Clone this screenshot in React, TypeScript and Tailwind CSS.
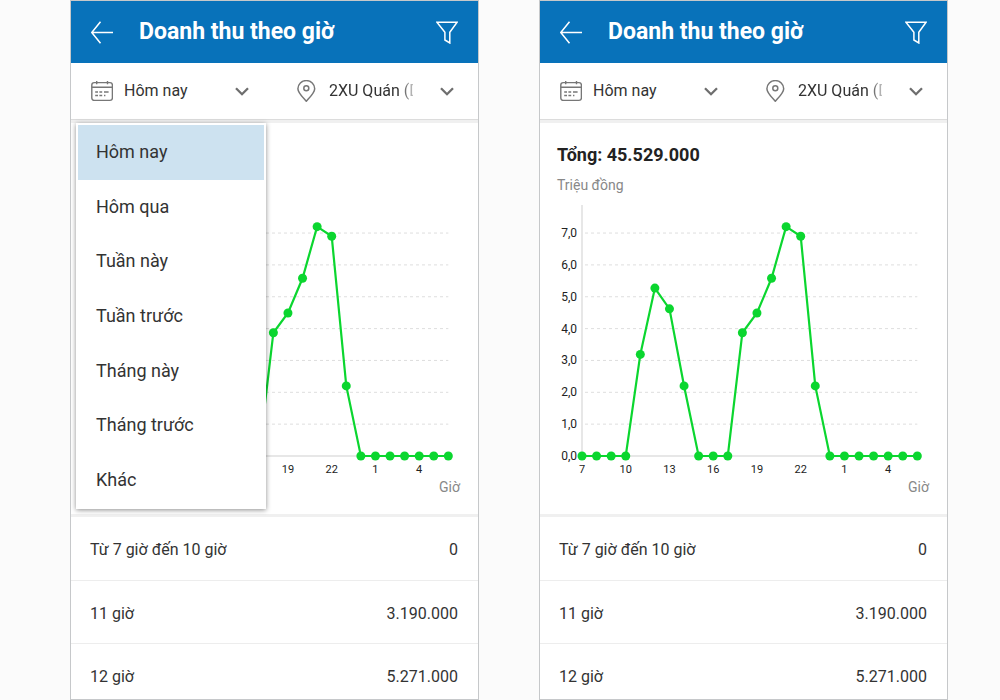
import React from "react";

const PERIODS = [
  "Hôm nay",
  "Hôm qua",
  "Tuần này",
  "Tuần trước",
  "Tháng này",
  "Tháng trước",
  "Khác",
];

const BRANCHES = ["2XU Quán (Duy Tân)"];

// Revenue in millions per hour, from 7:00 to 6:00 the next day
const REVENUE = [
  0, 0, 0, 0, 3.19, 5.271, 4.62, 2.2, 0, 0, 0, 3.87, 4.49, 5.58, 7.2, 6.9, 2.2,
  0, 0, 0, 0, 0, 0, 0,
];

const ROWS = [
  { label: "Từ 7 giờ đến 10 giờ", value: "0" },
  { label: "11 giờ", value: "3.190.000" },
  { label: "12 giờ", value: "5.271.000" },
];

const ORIGIN_X = 42;
const ORIGIN_Y = 261;
const STEP_X = 14.58;
const STEP_Y = 31.85;

const getX = (index: number) => ORIGIN_X + index * STEP_X;
const getY = (value: number) => ORIGIN_Y - value * STEP_Y;

const CalendarIcon = () => (
  <svg className="w-[22px] h-[22px] shrink-0" viewBox="0 0 22 22" fill="none" stroke="#777" strokeWidth="1.4" aria-hidden="true">
    <rect x="0.8" y="2.6" width="20.6" height="17.8" rx="2.4" />
    <path d="M0.8 7.2H21.4M5.7 1v3.2M16.5 1v3.2" />
    <path d="M4.2 12h2.8M8.4 12h2.8M13 12h4.6M4.2 15.4h2.8M8.4 15.4h2.8M13 15.4h1.4" strokeWidth="1.5" />
  </svg>
);

const PinIcon = () => (
  <svg className="w-[22px] h-[22px] shrink-0" viewBox="0 0 22 22" fill="none" stroke="#777" strokeWidth="1.5" aria-hidden="true">
    <path d="M10.3 21.2C7.7 18.2 1.9 13 1.9 8.7a8.4 8.1 0 0 1 16.8 0C18.7 13 12.9 18.2 10.3 21.2Z" />
    <circle cx="10.3" cy="8.2" r="2.5" />
  </svg>
);

const ChevronIcon = () => (
  <svg className="w-[14px] h-[9px] shrink-0" viewBox="0 0 14 9" fill="none" stroke="#6e6e6e" strokeWidth="2.3" aria-hidden="true">
    <path d="M1 1.2 7 7.2 13 1.2" />
  </svg>
);

const RevenueChart = () => (
  <svg className="block w-full h-auto" viewBox="0 0 407 319" role="img" aria-label="Doanh thu theo giờ">
    {[1, 2, 3, 4, 5, 6, 7].map(value => (
      <line
        key={value}
        x1={ORIGIN_X + 3}
        x2={getX(23)}
        y1={getY(value)}
        y2={getY(value)}
        stroke="#dedede"
        strokeDasharray="3 3"
      />
    ))}
    <path d={`M${ORIGIN_X} 10V${ORIGIN_Y}H${getX(23)}`} fill="none" stroke="#cfcfcf" />

    {[0, 1, 2, 3, 4, 5, 6, 7].map(value => (
      <text key={value} x="37" y={getY(value) + 4} textAnchor="end" fontSize="12" fill="#222">
        {value},0
      </text>
    ))}
    {[7, 10, 13, 16, 19, 22, 1, 4].map((hour, i) => (
      <text key={hour} x={getX(i * 3)} y="278" textAnchor="middle" fontSize="11" fill="#222">
        {hour}
      </text>
    ))}
    <text x="389" y="297" textAnchor="end" fontSize="14" fill="#888">
      Giờ
    </text>

    <polyline
      points={REVENUE.map((v, i) => `${getX(i)},${getY(v)}`).join(" ")}
      fill="none"
      stroke="#0bd62f"
      strokeWidth="2.2"
    />
    {REVENUE.map((v, i) => (
      <circle key={i} cx={getX(i)} cy={getY(v)} r="4.5" fill="#0bd62f" />
    ))}
  </svg>
);

interface RevenueScreenProps {
  id: string;
  defaultOpen?: boolean;
}

const RevenueScreen: React.FC<RevenueScreenProps> = ({ id, defaultOpen = false }) => {
  const [isOpen, setIsOpen] = React.useState(defaultOpen);
  const [period, setPeriod] = React.useState(PERIODS[0]);

  return (
    <section className="flex flex-col min-w-0 h-full bg-white border border-[#c6c8ca] overflow-hidden">
      {/* Header */}
      <header className="flex items-center h-[62px] shrink-0 px-5 bg-[#0872ba] text-white">
        <button type="button" aria-label="Quay lại">
          <svg className="w-[22px] h-[24px]" viewBox="0 0 22 24" fill="none" stroke="currentColor" strokeWidth="1.5">
            <path d="M22 12.5H0.8M9.5 1.7 0.8 12.5 9.5 23.3" />
          </svg>
        </button>
        <h1 className="flex-1 ml-[26px] text-[23px] leading-8 font-bold">Doanh thu theo giờ</h1>
        <button type="button" aria-label="Lọc">
          <svg className="w-[22px] h-[24px]" viewBox="0 0 22 24" fill="none" stroke="currentColor" strokeWidth="1.5">
            <path d="M0.9 2.2H21.1L13.8 12.2V23L8.9 20V12.2Z" />
          </svg>
        </button>
      </header>

      {/* Filters */}
      <div className="relative grid grid-cols-2 gap-[47px] h-14 shrink-0 pl-5 pr-6 text-[#333]">
        <label htmlFor={`${id}-period`} className="flex items-center gap-[11px] min-w-0">
          <CalendarIcon />
          <select
            id={`${id}-period`}
            aria-label="Thời gian"
            className="flex-1 min-w-0 appearance-none bg-transparent text-base outline-none"
            value={period}
            onChange={e => setPeriod(e.target.value)}
            onMouseDown={e => {
              e.preventDefault();
              setIsOpen(!isOpen);
            }}
          >
            {PERIODS.map(item => (
              <option key={item}>{item}</option>
            ))}
          </select>
          <ChevronIcon />
        </label>
        <label htmlFor={`${id}-branch`} className="flex items-center gap-[11px] min-w-0">
          <PinIcon />
          <select
            id={`${id}-branch`}
            aria-label="Chi nhánh"
            className="flex-1 min-w-0 mr-4 appearance-none bg-transparent text-base outline-none [mask-image:linear-gradient(to_right,black_70px,transparent_90px)]"
          >
            {BRANCHES.map(item => (
              <option key={item}>{item}</option>
            ))}
          </select>
          <ChevronIcon />
        </label>

        {/* Period menu */}
        {isOpen && (
          <div
            role="listbox"
            aria-label="Thời gian"
            className="absolute z-10 left-[5px] top-full mt-1 flex flex-col w-[190px] h-[386px] p-0.5 bg-white shadow-[0_1px_5px_rgba(0,0,0,0.45)]"
          >
            {PERIODS.map(item => (
              <button
                key={item}
                type="button"
                role="option"
                aria-selected={item === period}
                className={`flex-1 pl-[18px] text-left text-lg text-[#333] ${
                  item === period ? "bg-[#cde2f0]" : ""
                }`}
                onClick={() => {
                  setPeriod(item);
                  setIsOpen(false);
                }}
              >
                {item}
              </button>
            ))}
          </div>
        )}
      </div>

      {/* Chart */}
      <div className="shrink-0 border-t border-t-[#dcdcdc]">
        <div className="h-[3px] bg-[#f0f0f0]" />
        <h2 className="pt-5 pl-[17px] text-lg leading-6 font-bold text-[#222]">Tổng: 45.529.000</h2>
        <p className="mt-2 pl-[17px] text-sm leading-5 text-[#888]">Triệu đồng</p>
        <RevenueChart />
      </div>

      {/* Hourly list */}
      <div className="flex-1 min-h-0 overflow-hidden border-t-3 border-[#f0f0f0]">
        <table className="w-full text-base text-[#333]">
          <tbody>
            {ROWS.map(row => (
              <tr key={row.label} className="h-[63px] border-b border-[#ededed]">
                <th scope="row" className="pt-1 pl-[19px] text-left font-normal">
                  {row.label}
                </th>
                <td className="pt-1 pr-5 text-right">{row.value}</td>
              </tr>
            ))}
          </tbody>
        </table>
      </div>
    </section>
  );
};

export default function App() {
  return (
    <main className="grid grid-cols-2 gap-[60px] h-screen pl-[70px] pr-[52px] bg-[#fbfbfb] font-[Roboto,sans-serif]">
      <RevenueScreen id="left" defaultOpen />
      <RevenueScreen id="right" />
    </main>
  );
}
